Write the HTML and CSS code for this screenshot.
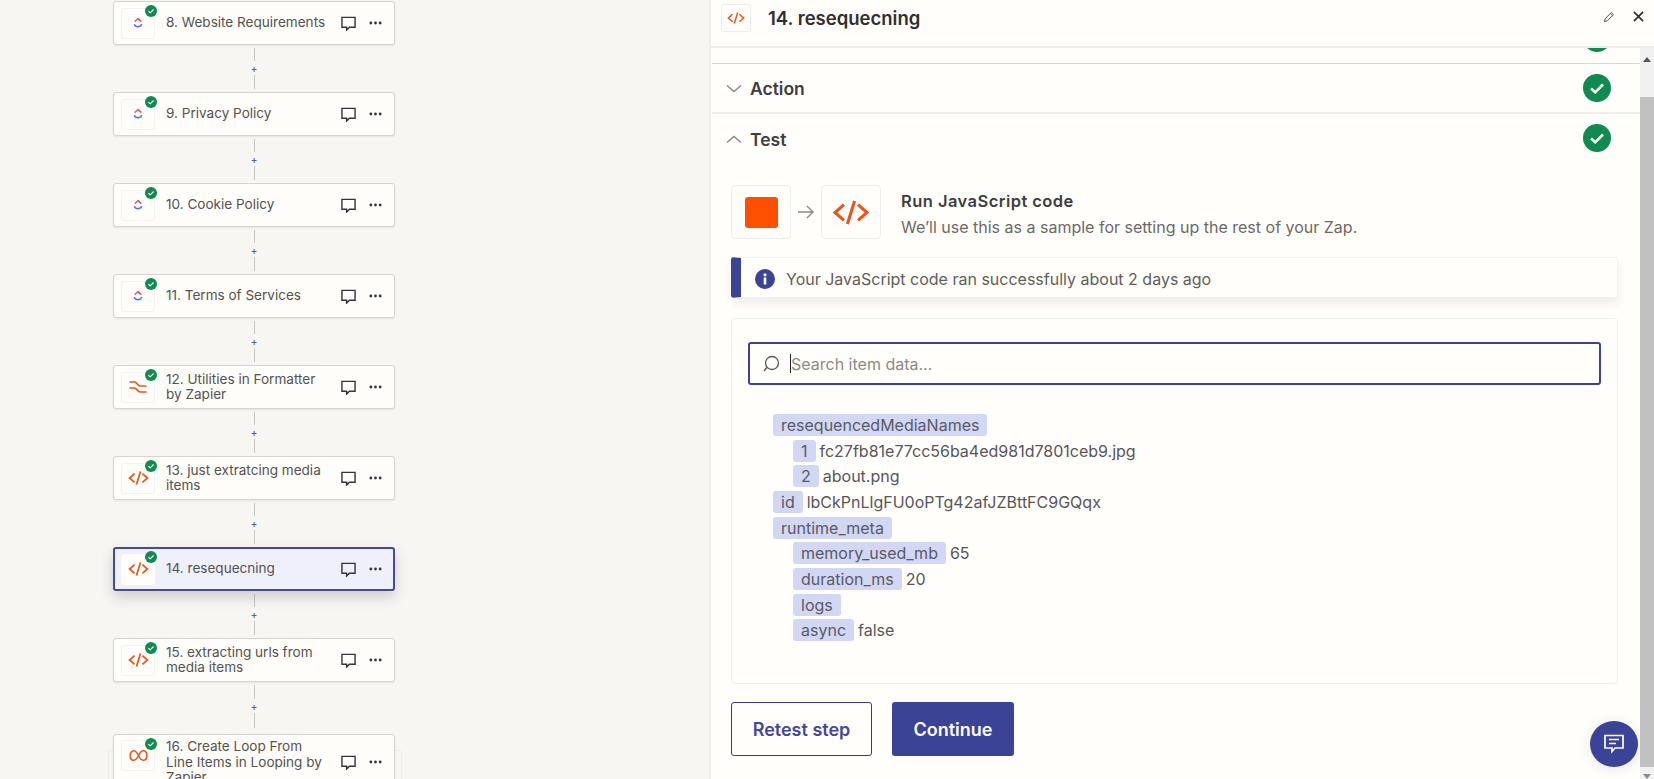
FILE: index.html
```html
<!DOCTYPE html>
<html lang="en">
<head>
<meta charset="utf-8">
<title>14. resequecning</title>
<link rel="stylesheet" href="styles.css">
</head>
<body>
<svg class="defs" aria-hidden="true">
  <symbol id="code" viewBox="0 0 24 16"><path d="M7.500 3 1.800 8l5.700 5M16.500 3l5.700 5-5.700 5M14.300.6 9.700 15.400" fill="none" stroke="#e4571f" stroke-width="2"/></symbol>
  <symbol id="clickup" viewBox="0 0 12 14"><path d="M2 5.300 6 1.800l1.800 1.500" fill="none" stroke="#c95ad6" stroke-width="1.800"/><path d="M6 1.800 10 5.300" fill="none" stroke="#f0522f" stroke-width="1.800"/><path d="M1.500 8.500C3 12.600 9 12.600 10.500 8.500" fill="none" stroke="#6a63e8" stroke-width="1.800"/><path d="M7 11.300C8.500 11 9.800 10 10.500 8.500" fill="none" stroke="#3fa4ee" stroke-width="1.800"/></symbol>
  <symbol id="comment" viewBox="0 0 16 16"><path d="M1 1.500h14v10.500H9l-3 3v-3H1z" fill="none" stroke="#33343c" stroke-width="1.500"/></symbol>
  <symbol id="dots" viewBox="0 0 14 4"><circle cx="2" cy="2" r="1.500" fill="#33343c"/><circle cx="7" cy="2" r="1.500" fill="#33343c"/><circle cx="12" cy="2" r="1.500" fill="#33343c"/></symbol>
  <symbol id="check" viewBox="0 0 28 28"><circle cx="14" cy="14" r="14" fill="#108a50"/><path d="M8 14.500l4.200 3.800L20 10.500" fill="none" stroke="#fffefb" stroke-width="2.600"/></symbol>
</svg>
<main class="app">
  <section class="canvas">
    <div class="ghost"></div>
    <article class="card"><span class="app-icon"><svg class="ic-clickup"><use href="#clickup"/></svg></span><svg class="badge"><use href="#check"/></svg><p class="name">8. Website Requirements</p><svg class="ic-comment"><use href="#comment"/></svg><svg class="ic-dots"><use href="#dots"/></svg></article>
    <div class="link"><i></i><b>+</b><i></i></div>
    <article class="card"><span class="app-icon"><svg class="ic-clickup"><use href="#clickup"/></svg></span><svg class="badge"><use href="#check"/></svg><p class="name">9. Privacy Policy</p><svg class="ic-comment"><use href="#comment"/></svg><svg class="ic-dots"><use href="#dots"/></svg></article>
    <div class="link"><i></i><b>+</b><i></i></div>
    <article class="card"><span class="app-icon"><svg class="ic-clickup"><use href="#clickup"/></svg></span><svg class="badge"><use href="#check"/></svg><p class="name">10. Cookie Policy</p><svg class="ic-comment"><use href="#comment"/></svg><svg class="ic-dots"><use href="#dots"/></svg></article>
    <div class="link"><i></i><b>+</b><i></i></div>
    <article class="card"><span class="app-icon"><svg class="ic-clickup"><use href="#clickup"/></svg></span><svg class="badge"><use href="#check"/></svg><p class="name">11. Terms of Services</p><svg class="ic-comment"><use href="#comment"/></svg><svg class="ic-dots"><use href="#dots"/></svg></article>
    <div class="link"><i></i><b>+</b><i></i></div>
    <article class="card"><span class="app-icon"><svg class="ic-fmt" viewBox="0 0 18 14"><path d="M.5 2h5c2.500 0 3 4 5.500 4h6.500M.5 8h5c2.500 0 3 4 5.500 4h6.500" fill="none" stroke="#e4571f" stroke-width="1.700"/></svg></span><svg class="badge"><use href="#check"/></svg><p class="name">12. Utilities in Formatter<br>by Zapier</p><svg class="ic-comment"><use href="#comment"/></svg><svg class="ic-dots"><use href="#dots"/></svg></article>
    <div class="link"><i></i><b>+</b><i></i></div>
    <article class="card"><span class="app-icon"><svg class="ic-app"><use href="#code"/></svg></span><svg class="badge"><use href="#check"/></svg><p class="name">13. just extratcing media<br>items</p><svg class="ic-comment"><use href="#comment"/></svg><svg class="ic-dots"><use href="#dots"/></svg></article>
    <div class="link"><i></i><b>+</b><i></i></div>
    <article class="card active"><span class="app-icon"><svg class="ic-app"><use href="#code"/></svg></span><svg class="badge"><use href="#check"/></svg><p class="name">14. resequecning</p><svg class="ic-comment"><use href="#comment"/></svg><svg class="ic-dots"><use href="#dots"/></svg></article>
    <div class="link"><i></i><b>+</b><i></i></div>
    <article class="card"><span class="app-icon"><svg class="ic-app"><use href="#code"/></svg></span><svg class="badge"><use href="#check"/></svg><p class="name">15. extracting urls from<br>media items</p><svg class="ic-comment"><use href="#comment"/></svg><svg class="ic-dots"><use href="#dots"/></svg></article>
    <div class="link long"><i></i><b>+</b><i></i></div>
    <article class="card tall"><span class="app-icon"><svg class="ic-loop" viewBox="0 0 24 16"><path d="M12 8C10 4 8.500 2 6 2 3.200 2 1.500 4.800 1.500 8s1.700 6 4.500 6c2.500 0 4-2 6-6s3.500-6 6-6c2.800 0 4.500 2.800 4.500 6s-1.700 6-4.500 6c-2.500 0-4-2-6-6" fill="none" stroke="#e4571f" stroke-width="2"/></svg></span><svg class="badge"><use href="#check"/></svg><p class="name">16. Create Loop From<br>Line Items in Looping by<br>Zapier</p><svg class="ic-comment"><use href="#comment"/></svg><svg class="ic-dots"><use href="#dots"/></svg></article>
  </section>

  <section class="panel">
    <header class="panel-head">
      <span class="head-icon"><svg class="ic-head"><use href="#code"/></svg></span>
      <h1>14. resequecning</h1>
      <svg class="ic-pencil" viewBox="0 0 12 12"><path d="M1.500 10.500l.6-2.800L8.300 1.500l2.200 2.200-6.200 6.200zM7.300 2.500l2.200 2.200" fill="none" stroke="#44454d" stroke-width=".9"/></svg>
      <svg class="ic-close" viewBox="0 0 12 12"><path d="M1 1l10 10M11 1 1 11" fill="none" stroke="#2d2e2e" stroke-width="1.800"/></svg>
    </header>
    <div class="panel-body">
      <div class="content">
        <div class="prev"><svg class="status"><use href="#check"/></svg></div>
        <div class="row action">
          <svg class="chev" viewBox="0 0 16 9"><path d="M1 1.500 8 7.500l7-6" fill="none" stroke="#8a8a8a" stroke-width="1.500"/></svg>
          <h2>Action</h2>
          <svg class="status"><use href="#check"/></svg>
        </div>
        <div class="row test">
          <svg class="chev" viewBox="0 0 16 9"><path d="M1 7.500 8 1.500l7 6" fill="none" stroke="#8a8a8a" stroke-width="1.500"/></svg>
          <h2>Test</h2>
          <svg class="status"><use href="#check"/></svg>
        </div>
        <div class="test-body">
          <div class="intro">
            <span class="big-icon"><span class="square"></span></span>
            <svg class="arrow" viewBox="0 0 18 14"><path d="M1 7h15M10 1l6 6-6 6" fill="none" stroke="#8a8a8a" stroke-width="1.400"/></svg>
            <span class="big-icon"><svg class="ic-big"><use href="#code"/></svg></span>
            <div class="intro-text">
              <h3>Run JavaScript code</h3>
              <p>We’ll use this as a sample for setting up the rest of your Zap.</p>
            </div>
          </div>
          <div class="alert">
            <svg class="ic-info" viewBox="0 0 20 20"><circle cx="10" cy="10" r="10" fill="#3b4397"/><rect x="8.700" y="8.500" width="2.600" height="7" fill="#fff"/><circle cx="10" cy="5.800" r="1.600" fill="#fff"/></svg>
            <span>Your JavaScript code ran successfully about 2 days ago</span>
          </div>
          <div class="data">
            <div class="search">
              <svg class="ic-search" viewBox="0 0 20 20"><circle cx="11" cy="9" r="6.500" fill="none" stroke="#55565c" stroke-width="1.300"/><path d="M5.800 13.500 3 17" fill="none" stroke="#55565c" stroke-width="1.300"/></svg>
              <span class="caret"></span>
              <span class="placeholder">Search item data...</span>
            </div>
            <ul class="tree">
              <li><span class="key">resequencedMediaNames</span></li>
              <li class="sub"><span class="key">1</span>fc27fb81e77cc56ba4ed981d7801ceb9.jpg</li>
              <li class="sub"><span class="key">2</span>about.png</li>
              <li><span class="key">id</span>lbCkPnLlgFU0oPTg42afJZBttFC9GQqx</li>
              <li><span class="key">runtime_meta</span></li>
              <li class="sub"><span class="key">memory_used_mb</span>65</li>
              <li class="sub"><span class="key">duration_ms</span>20</li>
              <li class="sub"><span class="key">logs</span></li>
              <li class="sub"><span class="key">async</span>false</li>
            </ul>
          </div>
          <div class="buttons">
            <button class="btn ghost-btn" type="button">Retest step</button>
            <button class="btn primary" type="button">Continue</button>
          </div>
        </div>
        <button class="chat" type="button" aria-label="Chat"><svg viewBox="0 0 20 20"><path d="M1 1.500h18v12.500h-8l-3 3.500v-3.500H1z" fill="none" stroke="#fff" stroke-width="1.700"/><path d="M5 5.500h10M5 9.500h7" stroke="#fff" stroke-width="1.700"/></svg></button>
      </div>
      <div class="scrollbar">
        <span class="tri up"></span>
        <span class="thumb"></span>
        <span class="tri down"></span>
      </div>
    </div>
  </section>
</main>
</body>
</html>
```

FILE: styles.css
```css
* { box-sizing: border-box; }
html, body { margin: 0; height: 100%; overflow: hidden; }
body { font-family: Inter, "Liberation Sans", sans-serif; color: #403f3e; background: #f7f6f3; }
h1, h2, h3, p, ul { margin: 0; padding: 0; }
.defs { position: absolute; width: 0; height: 0; }

.app { display: flex; width: 1654px; height: 779px; overflow: hidden; }

/* canvas */
.canvas { position: relative; flex: 0 0 709px; height: 779px; overflow: hidden; padding: 1px 0 0 113px; background: #f7f6f3; }
.ghost { position: absolute; left: 108px; top: 750px; width: 294px; height: 60px; border: 1px solid #eeede9; border-radius: 3px; }
.card { position: relative; display: flex; align-items: center; width: 282px; height: 44px; padding: 0 12px 0 7px; background: #fffdf9; border: 1px solid #d6d5d1; border-radius: 3px; box-shadow: 0 1px 2px rgba(0,0,0,.08); }
.card.active { background: #eff0fb; border: 2px solid #474a94; padding: 0 11px 0 6px; box-shadow: 0 6px 14px rgba(40,40,60,.2); }
.card.tall { overflow: hidden; height: 56px; }
.app-icon { flex: none; display: flex; align-items: center; justify-content: center; width: 34px; height: 31px; border: 1px solid #f4f3ef; border-radius: 3px; background: #fffdf9; }
.active .app-icon { border-color: #fffdf9; }
.tall .app-icon { align-self: flex-start; margin-top: 5px; }
.ic-clickup { width: 10px; height: 12px; }
.ic-app { width: 21px; height: 14px; }
.ic-fmt { width: 18px; height: 14px; }
.ic-loop { width: 19px; height: 13px; }
.badge { position: absolute; left: 31px; top: 3px; width: 12px; height: 12px; }
.active .badge { left: 30px; top: 2px; }
.tall .badge { top: 3px; }
.name { flex: 1; margin-left: 11px; font-size: 13.550px; line-height: 15.500px; color: #54534f; white-space: nowrap; }
.tall .name { align-self: flex-start; padding-top: 4px; }
.ic-comment { flex: none; width: 15px; height: 15px; }
.ic-dots { flex: none; width: 13px; height: 4px; margin-left: 13px; }

.link { display: flex; flex-direction: column; align-items: center; width: 282px; height: 47px; padding: 3px 0 3px; }
.link i { flex: 1; width: 1px; background: #c8c7c3; }
.link i:first-child { flex: 0 0 13px; }
.link b { flex: none; height: 14px; font-size: 10px; line-height: 14px; font-weight: 500; color: #5a5da3; }
.link.long { height: 52px; padding-bottom: 6px; }
.link.long i:first-child { flex-basis: 14px; }

/* panel */
.panel { flex: 1; display: flex; flex-direction: column; min-width: 0; height: 779px; background: #fffefb; border-left: 2px solid #efeeea; }
.panel-head { flex: none; display: flex; align-items: center; height: 48px; padding: 0 10px 10px 10px; border-bottom: 2px solid #eeede9; }
.head-icon { flex: none; display: flex; align-items: center; justify-content: center; width: 30px; height: 28px; border: 1px solid #eeede9; border-radius: 3px; }
.ic-head { width: 18px; height: 12px; }
.panel-head h1 { flex: 1; margin-left: 17px; font-size: 18.500px; font-weight: 600; color: #2f2f2f; }
.ic-pencil { width: 12px; height: 12px; margin-bottom: 3px; }
.ic-close { width: 11px; height: 11px; margin: 0 0 3px 18px; }

.panel-body { flex: 1; display: flex; min-height: 0; }
.content { position: relative; flex: 1; min-width: 0; overflow: hidden; }
.prev { display: flex; justify-content: flex-end; height: 16px; padding: 0 29px 0 0; overflow: hidden; border-bottom: 1px solid #d8d7d3; margin-left: 1px; }
.prev .status { margin-top: -24px; }
.status { flex: none; width: 28px; height: 28px; }
.row { display: flex; align-items: center; margin-left: 1px; padding: 0 29px 0 14px; }
.action { height: 50px; border-bottom: 2px solid #eeede9; }
.test { height: 48px; }
.test .chev, .test h2 { margin-top: 3px; }
.chev { flex: none; width: 16px; height: 9px; }
.row h2 { flex: 1; margin-left: 8px; font-size: 17.500px; font-weight: 600; color: #3d3d3d; }

.test-body { padding: 23px 22px 0 20px; }
.intro { display: flex; align-items: center; height: 54px; }
.big-icon { flex: none; display: flex; align-items: center; justify-content: center; width: 60px; height: 54px; border: 1px solid #efeeea; border-radius: 4px; }
.square { width: 33px; height: 31px; background: #ff4f00; border-radius: 3px; }
.ic-big { width: 38px; height: 25px; }
.arrow { flex: none; width: 18px; height: 14px; margin: 0 6px; }
.intro-text { margin-left: 20px; padding-top: 2px; }
.intro-text h3 { font-size: 16.500px; line-height: 22px; font-weight: 600; letter-spacing: .45px; color: #3d3d3d; }
.intro-text p { margin-top: 5px; font-size: 16px; line-height: 20px; color: #6b6a66; }

.alert { display: flex; align-items: center; height: 41px; margin-top: 18px; padding: 2px 0 0 16px; border: 1px solid #f2f1ed; border-left: 10px solid #3b4397; border-radius: 3px; box-shadow: 0 5px 10px rgba(0,0,0,.07); font-size: 16px; color: #5f5e5a; }
.ic-info { flex: none; width: 20px; height: 20px; margin-right: 11px; margin-left: -2px; }

.data { height: 366px; margin-top: 20px; padding: 23px 16px 0; border: 1px solid #f0efeb; border-radius: 4px; }
.search { display: flex; align-items: center; height: 43px; padding-left: 11px; border: 2px solid #3b4397; border-radius: 3px; }
.ic-search { flex: none; width: 20px; height: 20px; margin-right: 9px; }
.caret { flex: none; width: 1px; height: 19px; background: #222; }
.placeholder { font-size: 16px; color: #8c8b87; }
.tree { list-style: none; margin-top: 27px; padding-left: 25px; font-size: 16px; color: #57565a; }
.tree li { display: flex; align-items: center; height: 25.700px; white-space: nowrap; }
.tree .sub { padding-left: 20px; }
.key { display: inline-block; height: 22px; line-height: 22px; padding: 0 8px; margin-right: 4px; background: #d2d7f3; border-radius: 3px; color: #5a5a66; }

.buttons { display: flex; gap: 20px; margin-top: 18px; }
.btn { height: 54px; font: 600 18px Inter, "Liberation Sans", sans-serif; border-radius: 3px; }
.ghost-btn { width: 141px; color: #45479a; background: #fffefb; border: 1px solid #3b3b85; }
.primary { width: 122px; color: #fff; background: #3b4397; border: 0; }

.chat { position: absolute; right: 2px; top: 673px; width: 48px; height: 46px; padding: 0; display: flex; align-items: center; justify-content: center; border: 0; border-radius: 50%; background: #3b4397; box-shadow: 0 2px 14px rgba(0,0,0,.1); }
.chat svg { width: 20px; height: 20px; }

.scrollbar { position: relative; flex: none; display: flex; flex-direction: column; align-items: center; width: 14px; background: #f1f1f1; }
.tri { flex: none; width: 0; height: 0; border-left: 4px solid transparent; border-right: 4px solid transparent; }
.tri.up { margin: 9px 0 35px; border-bottom: 5px solid #55565a; }
.tri.down { margin: 7px 0 0; border-top: 5px solid #8a8a8a; }
.thumb { flex: 1; width: 100%; background: #c1c1c1; }
```
